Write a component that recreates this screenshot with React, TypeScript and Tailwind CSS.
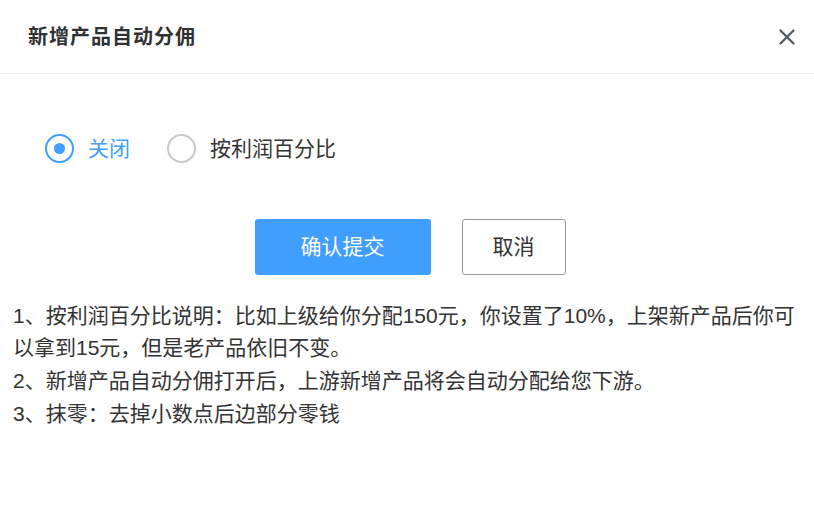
import { X } from "lucide-react";

const font = { fontFamily: '"Liberation Sans", "Noto Sans CJK SC", sans-serif' };

function Radio({ label, checked }: { label: string; checked?: boolean }) {
  return (
    <label className="flex items-center gap-[14px] cursor-pointer">
      <span
        className={`w-[29px] h-[29px] rounded-full border-2 flex items-center justify-center ${
          checked ? "border-[#409eff]" : "border-[#c8c9cc]"
        }`}
      >
        {checked && <span className="w-[11px] h-[11px] rounded-full bg-[#409eff]" />}
      </span>
      <span className={`text-[21px] ${checked ? "text-[#409eff]" : "text-[#333333]"}`}>{label}</span>
    </label>
  );
}

export default function App() {
  return (
    <div className="w-[814px] h-[517px] bg-white text-[#333333]" style={font}>
      {/* Header */}
      <div className="h-[74px] flex items-center justify-between pl-[28px] pr-[14px] border-b border-[#ebeef5]">
        <h2 className="text-[20px] font-bold text-[#303133] tracking-[1px]">新增产品自动分佣</h2>
        <X size={26} strokeWidth={2.2} className="text-[#555a63]" />
      </div>

      {/* Radios */}
      <div className="flex items-center gap-[37px] pl-[45px] pt-[59px]">
        <Radio label="关闭" checked />
        <Radio label="按利润百分比" />
      </div>

      {/* Buttons */}
      <div className="flex justify-center gap-[31px] mt-[54px] pl-[6px]">
        <button className="w-[176px] h-[56px] rounded-[3px] bg-[#409eff] text-white text-[21px]">
          确认提交
        </button>
        <button className="w-[104px] h-[56px] rounded-[3px] border border-[#999999] bg-white text-[#333333] text-[21px]">
          取消
        </button>
      </div>

      {/* Notes */}
      <div className="pl-[13px] pr-[10px] pt-[25px] text-[21px] leading-[32.7px] text-[#333333]">
        <p>1、按利润百分比说明：比如上级给你分配150元，你设置了10%，上架新产品后你可以拿到15元，但是老产品依旧不变。</p>
        <p>2、新增产品自动分佣打开后，上游新增产品将会自动分配给您下游。</p>
        <p>3、抹零：去掉小数点后边部分零钱</p>
      </div>
    </div>
  );
}
